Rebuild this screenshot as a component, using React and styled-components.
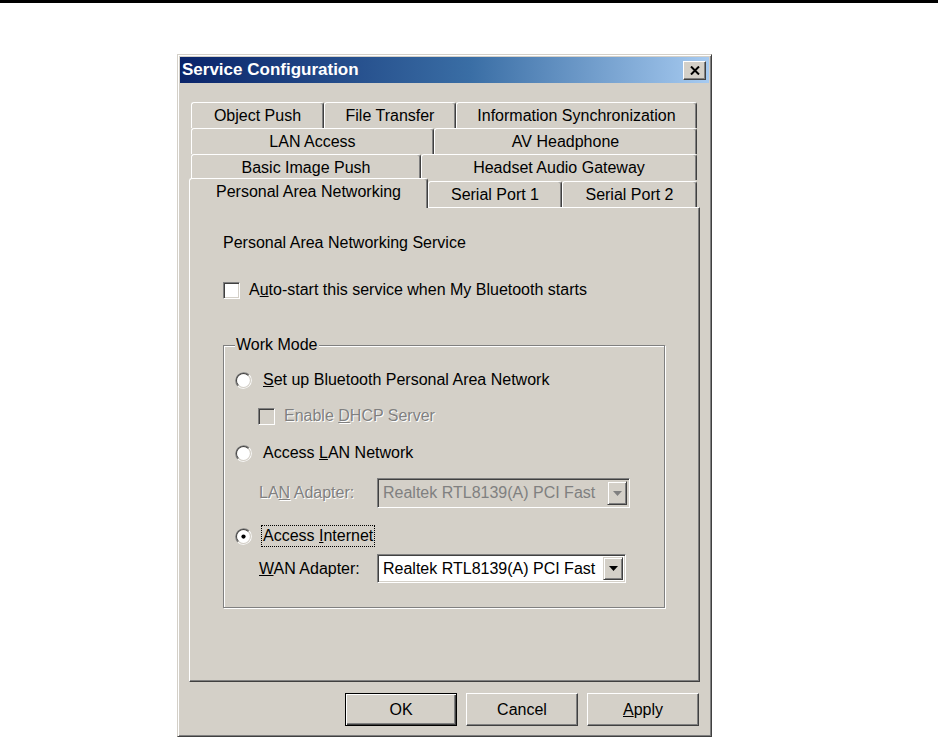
import styled, { createGlobalStyle, css } from "styled-components";

const GlobalStyle = createGlobalStyle`
  body {
    margin: 0;
    background: #fff;
    font-family: "Liberation Sans", Arial, sans-serif;
  }
`;

const FACE = "#d4d0c8";
const SHADOW = "#808080";
const DARK = "#404040";

const TopRule = styled.div`
  height: 3px;
  background: #000;
`;

const Window = styled.div`
  width: 535px;
  box-sizing: border-box;
  margin: 51px 0 0 177px;
  padding: 2px;
  background: ${FACE};
  border: 1px solid;
  border-color: ${FACE} ${DARK} ${DARK} ${FACE};
  box-shadow: inset 1px 1px #fff, inset -1px -1px ${SHADOW};
`;

const TitleBar = styled.div`
  height: 26px;
  display: flex;
  align-items: center;
  justify-content: space-between;
  padding: 0 3px 0 2px;
  background: linear-gradient(90deg, #0a246a 0%, #3a6ea5 55%, #a6caf0 100%);
  color: #fff;
  font-weight: bold;
  font-size: 17px;
  font-family: "Liberation Sans", Arial, sans-serif;
`;

const CloseBtn = styled.div`
  width: 23px;
  height: 19px;
  box-sizing: border-box;
  display: flex;
  align-items: center;
  justify-content: center;
  background: ${FACE};
  border: 1px solid;
  border-color: #fff ${DARK} ${DARK} #fff;
  box-shadow: inset -1px -1px ${SHADOW};
`;

const Body = styled.div`
  padding: 19px 9px 8px 9px;
`;

const TabArea = styled.div`
  display: flex;
  flex-direction: column;
`;

const TabRow = styled.div`
  display: flex;
  align-items: flex-end;
  height: ${(p) => (p.$front ? 29 : 26)}px;
  padding-left: ${(p) => (p.$front ? 0 : 2)}px;
  margin-top: ${(p) => (p.$front ? -2 : 0)}px;
`;

const Tab = styled.div`
  flex: 0 0 ${(p) => p.$w}px;
  box-sizing: border-box;
  height: 26px;
  display: flex;
  align-items: center;
  justify-content: center;
  background: ${FACE};
  border-top: 1px solid #fff;
  border-left: 1px solid #fff;
  border-right: 1px solid ${DARK};
  box-shadow: inset -1px 0 ${SHADOW};
  border-radius: 3px 3px 0 0;
  font-size: 16px;
  color: #000;
  white-space: nowrap;
  ${(p) =>
    p.$selected &&
    css`
      height: 30px;
      margin-bottom: -1px;
      padding-bottom: 3px;
      position: relative;
      z-index: 1;
    `}
`;

const Panel = styled.div`
  height: 475px;
  box-sizing: border-box;
  border: 1px solid;
  border-color: #fff ${DARK} ${DARK} #fff;
  box-shadow: inset -1px -1px ${SHADOW};
  padding: 25px 0 0 33px;
  font-size: 16px;
  color: #000;
`;

const Line = styled.div`
  height: 20px;
  line-height: 20px;
  margin-top: ${(p) => p.$top || 0}px;
  margin-left: ${(p) => p.$indent || 0}px;
  display: flex;
  align-items: center;
  white-space: nowrap;
  ${(p) =>
    p.$disabled &&
    css`
      color: ${SHADOW};
      text-shadow: 1px 1px 0 #fff;
    `}
`;

const Check = styled.span`
  flex: 0 0 17px;
  height: 17px;
  box-sizing: border-box;
  margin-right: 9px;
  border: 1px solid;
  border-color: ${SHADOW} #fff #fff ${SHADOW};
  box-shadow: inset 1px 1px ${DARK}, inset -1px -1px ${FACE};
  background: ${(p) => (p.$disabled ? FACE : "#fff")};
`;

const Group = styled.fieldset`
  width: 442px;
  height: 273px;
  box-sizing: border-box;
  margin: 35px 0 0 0;
  padding: 15px 0 0 11px;
  border: 1px solid ${SHADOW};
  box-shadow: inset 1px 1px #fff, 1px 1px #fff;
`;

const Legend = styled.legend`
  padding: 0 1px;
  margin-left: 0;
  line-height: 20px;
  background: ${FACE};
`;

const Label = styled.span`
  padding: 0 1px;
  ${(p) =>
    p.$focus &&
    css`
      outline: 1px dotted #000;
      outline-offset: 0;
    `}
`;

const AdapterRow = styled.div`
  display: flex;
  align-items: center;
  margin-top: ${(p) => p.$top}px;
  margin-left: 24px;
  height: ${(p) => p.$h}px;
`;

const AdapterLabel = styled.span`
  flex: 0 0 118px;
  white-space: nowrap;
  ${(p) =>
    p.$disabled &&
    css`
      color: ${SHADOW};
      text-shadow: 1px 1px 0 #fff;
    `}
`;

const Combo = styled.div`
  width: ${(p) => p.$w}px;
  height: ${(p) => p.$h}px;
  box-sizing: border-box;
  display: flex;
  align-items: center;
  justify-content: space-between;
  padding: 2px 2px 2px 5px;
  border: 1px solid;
  border-color: ${SHADOW} #fff #fff ${SHADOW};
  box-shadow: inset 1px 1px ${DARK}, inset -1px -1px ${FACE};
  background: ${(p) => (p.$disabled ? FACE : "#fff")};
  color: ${(p) => (p.$disabled ? SHADOW : "#000")};
  white-space: nowrap;
`;

const DropBtn = styled.span`
  flex: 0 0 20px;
  height: 100%;
  box-sizing: border-box;
  display: flex;
  align-items: center;
  justify-content: center;
  background: ${FACE};
  border: 1px solid;
  border-color: ${FACE} ${DARK} ${DARK} ${FACE};
  box-shadow: inset 1px 1px #fff, inset -1px -1px ${SHADOW};
`;

const Buttons = styled.div`
  display: flex;
  justify-content: flex-end;
  gap: 9px;
  margin-top: 11px;
  padding-right: 1px;
`;

const Button = styled.button`
  width: 112px;
  height: 33px;
  box-sizing: border-box;
  padding: 0;
  font: 16px "Liberation Sans", Arial, sans-serif;
  color: #000;
  background: ${FACE};
  border: 1px solid;
  border-color: #fff ${DARK} ${DARK} #fff;
  box-shadow: inset -1px -1px ${SHADOW};
  ${(p) =>
    p.$default &&
    css`
      border: 1px solid #000;
      box-shadow: inset 1px 1px #fff, inset -1px -1px ${DARK},
        inset -2px -2px ${SHADOW};
    `}
`;

const Radio = ({ checked }) => (
  <svg width="17" height="17" viewBox="0 0 16 16" style={{ marginRight: 10, flex: "0 0 17px" }}>
    <path d="M2.7 13.3 A7.5 7.5 0 0 1 13.3 2.7" stroke={SHADOW} fill="none" />
    <path d="M13.3 2.7 A7.5 7.5 0 0 1 2.7 13.3" stroke="#fff" fill="none" />
    <path d="M3.4 12.6 A6.5 6.5 0 0 1 12.6 3.4" stroke={DARK} fill="none" />
    <path d="M12.6 3.4 A6.5 6.5 0 0 1 3.4 12.6" stroke={FACE} fill="none" />
    <circle cx="8" cy="8" r="6" fill="#fff" />
    {checked && <circle cx="8" cy="8" r="2" fill="#000" />}
  </svg>
);

const Arrow = ({ color }) => (
  <svg width="9" height="5" viewBox="0 0 9 5">
    <path d="M0 0 H9 L4.5 5 Z" fill={color} />
  </svg>
);

const tabRows = [
  [
    { label: "Object Push", w: 133 },
    { label: "File Transfer", w: 132 },
    { label: "Information Synchronization", w: 241 },
  ],
  [
    { label: "LAN Access", w: 243 },
    { label: "AV Headphone", w: 263 },
  ],
  [
    { label: "Basic Image Push", w: 230 },
    { label: "Headset Audio Gateway", w: 276 },
  ],
];

const frontRow = [
  { label: "Personal Area Networking", w: 239, selected: true },
  { label: "Serial Port 1", w: 134 },
  { label: "Serial Port 2", w: 135 },
];

const App = () => {
  return (
    <>
      <GlobalStyle />
      <TopRule />
      <Window>
        <TitleBar>
          <span>Service Configuration</span>
          <CloseBtn>
            <svg width="10" height="9" viewBox="0 0 10 9">
              <path d="M1 0.5 L9 8.5 M9 0.5 L1 8.5" stroke="#000" strokeWidth="2" />
            </svg>
          </CloseBtn>
        </TitleBar>
        <Body>
          <TabArea>
            {tabRows.map((row, i) => (
              <TabRow key={i}>
                {row.map((t) => (
                  <Tab key={t.label} $w={t.w}>
                    {t.label}
                  </Tab>
                ))}
              </TabRow>
            ))}
            <TabRow $front>
              {frontRow.map((t) => (
                <Tab key={t.label} $w={t.w} $selected={t.selected}>
                  {t.label}
                </Tab>
              ))}
            </TabRow>
          </TabArea>
          <Panel>
            <Line>Personal Area Networking Service</Line>
            <Line $top={27}>
              <Check />
              <span>
                A<u>u</u>to-start this service when My Bluetooth starts
              </span>
            </Line>
            <Group>
              <Legend>Work Mode</Legend>
              <Line>
                <Radio />
                <Label>
                  <u>S</u>et up Bluetooth Personal Area Network
                </Label>
              </Line>
              <Line $top={16} $indent={23} $disabled>
                <Check $disabled />
                <span>
                  Enable <u>D</u>HCP Server
                </span>
              </Line>
              <Line $top={17}>
                <Radio />
                <Label>
                  Access <u>L</u>AN Network
                </Label>
              </Line>
              <AdapterRow $top={15} $h={30}>
                <AdapterLabel $disabled>
                  LA<u>N</u> Adapter:
                </AdapterLabel>
                <Combo $w={253} $h={30} $disabled>
                  <span>Realtek RTL8139(A) PCI Fast</span>
                  <DropBtn>
                    <Arrow color={SHADOW} />
                  </DropBtn>
                </Combo>
              </AdapterRow>
              <Line $top={18}>
                <Radio checked />
                <Label $focus>
                  Access <u>I</u>nternet
                </Label>
              </Line>
              <AdapterRow $top={8} $h={29}>
                <AdapterLabel>
                  <u>W</u>AN Adapter:
                </AdapterLabel>
                <Combo $w={249} $h={29}>
                  <span>Realtek RTL8139(A) PCI Fast</span>
                  <DropBtn>
                    <Arrow color="#000" />
                  </DropBtn>
                </Combo>
              </AdapterRow>
            </Group>
          </Panel>
          <Buttons>
            <Button $default>OK</Button>
            <Button>Cancel</Button>
            <Button>
              <u>A</u>pply
            </Button>
          </Buttons>
        </Body>
      </Window>
    </>
  );
};

export default App;
